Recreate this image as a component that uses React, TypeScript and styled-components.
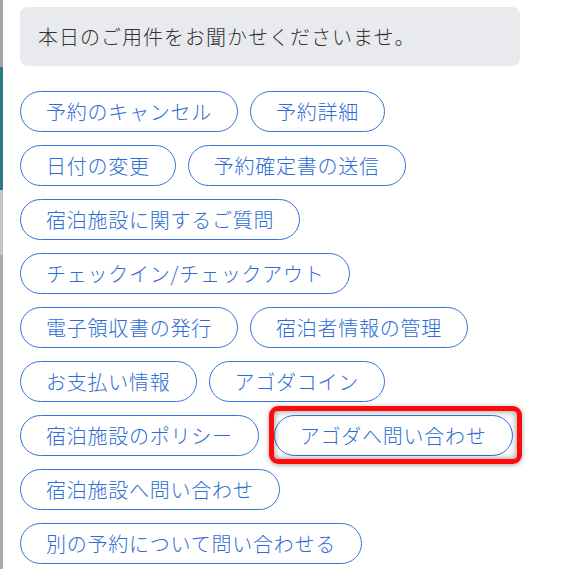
import React from "react";
import styled, { createGlobalStyle } from "styled-components";

const GlobalStyle = createGlobalStyle`
  html, body {
    margin: 0;
    padding: 0;
    background: #ffffff;
  }
  body {
    font-family: "Noto Sans CJK JP", "Noto Sans", sans-serif;
  }
`;

const Page = styled.div`
  display: flex;
  width: 588px;
  height: 569px;
  overflow: hidden;
  background: #ffffff;
`;

const EdgeStrip = styled.div`
  display: flex;
  flex-direction: column;
  width: 3px;
  flex: none;
`;

const EdgeBlock = styled.div<{ $h: number; $c: string }>`
  height: ${(p) => p.$h}px;
  background: ${(p) => p.$c};
  flex: none;
`;

const EdgeRest = styled.div`
  flex: 1;
  background: #a9a9a9;
`;

const Chat = styled.div`
  display: flex;
  flex-direction: column;
  padding: 7px 0 0 17px;
  width: 500px;
`;

const Bubble = styled.div`
  box-sizing: border-box;
  width: 500px;
  height: 59px;
  display: flex;
  align-items: center;
  padding: 0 18px;
  background: #e9eaee;
  border-radius: 8px;
  color: #333333;
  font-size: 20px;
  font-weight: 300;
  letter-spacing: 1px;
`;

const Options = styled.div`
  display: flex;
  flex-direction: column;
  gap: 13px;
  margin-top: 25px;
`;

const OptionRow = styled.div`
  display: flex;
  gap: 12px;
`;

const Pill = styled.button`
  box-sizing: border-box;
  height: 41px;
  padding: 0 25px;
  border: 1px solid #3474dc;
  border-radius: 21px;
  background: #ffffff;
  color: #2d6cd4;
  font-family: "Noto Sans CJK JP", "Noto Sans", sans-serif;
  font-size: 20px;
  font-weight: 300;
  letter-spacing: 0.75px;
  line-height: 1;
  white-space: nowrap;
  display: inline-flex;
  align-items: center;
  cursor: pointer;
`;

const Highlight = styled.span`
  position: relative;
  display: inline-flex;
  margin-left: 3px;

  &::after {
    content: "";
    position: absolute;
    left: -5px;
    right: -9px;
    top: -9px;
    bottom: -8px;
    border: 5px solid #ff0a0a;
    border-radius: 9px;
    box-shadow: 0 1px 5px rgba(0, 0, 0, 0.35), inset 0 0 7px rgba(0, 0, 0, 0.45);
    pointer-events: none;
  }
`;

const rows: string[][] = [
  ["予約のキャンセル", "予約詳細"],
  ["日付の変更", "予約確定書の送信"],
  ["宿泊施設に関するご質問"],
  ["チェックイン/チェックアウト"],
  ["電子領収書の発行", "宿泊者情報の管理"],
  ["お支払い情報", "アゴダコイン"],
  ["宿泊施設のポリシー", "アゴダへ問い合わせ"],
  ["宿泊施設へ問い合わせ"],
  ["別の予約について問い合わせる"],
];

const highlighted = "アゴダへ問い合わせ";

export default function App() {
  return (
    <>
      <GlobalStyle />
      <Page>
        <EdgeStrip>
          <EdgeBlock $h={67} $c="#aaa39d" />
          <EdgeBlock $h={123} $c="#2f7888" />
          <EdgeBlock $h={65} $c="#c4c4c4" />
          <EdgeRest />
        </EdgeStrip>
        <Chat>
          <Bubble>本日のご用件をお聞かせくださいませ。</Bubble>
          <Options>
            {rows.map((row, i) => (
              <OptionRow key={i}>
                {row.map((label) =>
                  label === highlighted ? (
                    <Highlight key={label}>
                      <Pill>{label}</Pill>
                    </Highlight>
                  ) : (
                    <Pill key={label}>{label}</Pill>
                  )
                )}
              </OptionRow>
            ))}
          </Options>
        </Chat>
      </Page>
    </>
  );
}
